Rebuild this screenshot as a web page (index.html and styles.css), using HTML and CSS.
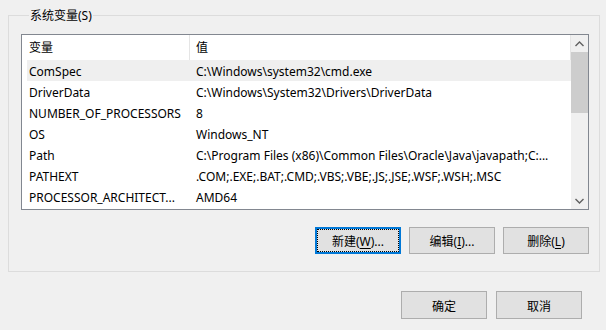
FILE: index.html
```html
<!DOCTYPE html>
<html lang="zh-CN">
<head>
  <meta charset="UTF-8">
  <meta name="viewport" content="width=device-width, initial-scale=1.0">
  <title>系统变量</title>
  <link rel="stylesheet" href="styles.css">
</head>
<body>
  <fieldset class="group">
    <legend>系统变量(S)</legend>

    <div class="listbox">
      <div class="list">
        <div class="list-head">
          <div class="col-name">变量</div>
          <div class="col-value">值</div>
        </div>
        <div class="row selected">
          <div class="col-name">ComSpec</div>
          <div class="col-value">C:\Windows\system32\cmd.exe</div>
        </div>
        <div class="row">
          <div class="col-name">DriverData</div>
          <div class="col-value">C:\Windows\System32\Drivers\DriverData</div>
        </div>
        <div class="row">
          <div class="col-name">NUMBER_OF_PROCESSORS</div>
          <div class="col-value">8</div>
        </div>
        <div class="row">
          <div class="col-name">OS</div>
          <div class="col-value">Windows_NT</div>
        </div>
        <div class="row">
          <div class="col-name">Path</div>
          <div class="col-value">C:\Program Files (x86)\Common Files\Oracle\Java\javapath;C:...</div>
        </div>
        <div class="row">
          <div class="col-name">PATHEXT</div>
          <div class="col-value">.COM;.EXE;.BAT;.CMD;.VBS;.VBE;.JS;.JSE;.WSF;.WSH;.MSC</div>
        </div>
        <div class="row">
          <div class="col-name">PROCESSOR_ARCHITECT...</div>
          <div class="col-value">AMD64</div>
        </div>
      </div>

      <div class="scrollbar">
        <div class="arrow">
          <svg width="9" height="6" viewBox="0 0 9 6"><path d="M0.5 5 L4.5 1 L8.5 5" fill="none" stroke="#606060" stroke-width="1.4"/></svg>
        </div>
        <div class="track">
          <div class="thumb"></div>
        </div>
        <div class="arrow">
          <svg width="9" height="6" viewBox="0 0 9 6"><path d="M0.5 1 L4.5 5 L8.5 1" fill="none" stroke="#606060" stroke-width="1.4"/></svg>
        </div>
      </div>
    </div>

    <div class="list-buttons">
      <button class="btn focused"><span>新建(<u>W</u>)...</span></button>
      <button class="btn"><span>编辑(<u>I</u>)...</span></button>
      <button class="btn"><span>删除(<u>L</u>)</span></button>
    </div>
  </fieldset>

  <div class="dialog-buttons">
    <button class="btn"><span>确定</span></button>
    <button class="btn"><span>取消</span></button>
  </div>
</body>
</html>
```

FILE: styles.css
```css
* {
  margin: 0;
  padding: 0;
  box-sizing: border-box;
}

body {
  font-family: "Noto Sans", "Noto Sans CJK SC", sans-serif;
  font-size: 12px;
  color: #000;
  background: #f0f0f0;
  width: 606px;
  height: 330px;
  overflow: hidden;
}

.group {
  margin: 7px 7px 0 8px;
  height: 265px;
  border: 1px solid #dcdcdc;
  padding: 0 10px 0 12px;
}

.group legend {
  margin-left: 8px;
  padding: 1px 1px 0;
  line-height: 16px;
}

.listbox {
  margin-top: 10px;
  width: 568px;
  height: 176px;
  border: 1px solid #828790;
  background: #fff;
  display: flex;
}

.list {
  flex: 1;
  overflow: hidden;
}

.list-head {
  display: flex;
  height: 25px;
  line-height: 22px;
  padding-top: 2px;
  border-right: 1px solid #e5e5e5;
}

.list-head .col-name {
  border-right: 1px solid #e5e5e5;
  margin-top: -2px;
  padding-top: 2px;
}

.col-name {
  width: 168px;
  padding-left: 7px;
  white-space: nowrap;
  overflow: hidden;
}

.col-value {
  flex: 1;
  padding-left: 6px;
  white-space: nowrap;
  overflow: hidden;
}

.row {
  display: flex;
  height: 21px;
  line-height: 19px;
  padding-top: 2px;
  margin-left: 5px;
}

.row .col-name {
  width: 163px;
  padding-left: 2px;
}

.row.selected {
  background: #efefef;
}

.scrollbar {
  width: 17px;
  background: #f0f0f0;
  display: flex;
  flex-direction: column;
}

.arrow {
  height: 17px;
  display: flex;
  align-items: center;
  justify-content: center;
}

.track {
  flex: 1;
}

.thumb {
  height: 61px;
  background: #cdcdcd;
}

.list-buttons {
  display: flex;
  justify-content: flex-end;
  gap: 8px;
  margin-top: 17px;
}

.btn {
  width: 86px;
  height: 27px;
  font-family: inherit;
  font-size: 12px;
  color: #000;
  background: #e1e1e1;
  border: 1px solid #adadad;
  display: flex;
  align-items: center;
  justify-content: center;
  padding-top: 1px;
}

.btn u {
  text-decoration-thickness: 1px;
  text-underline-offset: 2px;
}

.btn.focused {
  border: 2px solid #0078d7;
  padding: 1px;
}

.btn.focused span {
  flex: 1;
  align-self: stretch;
  display: flex;
  align-items: center;
  justify-content: center;
  padding-top: 1px;
  outline: 1px dotted #000;
}

.dialog-buttons {
  display: flex;
  justify-content: flex-end;
  gap: 9px;
  margin-top: 19px;
  padding-right: 24px;
}

.dialog-buttons .btn {
  height: 28px;
}
```
